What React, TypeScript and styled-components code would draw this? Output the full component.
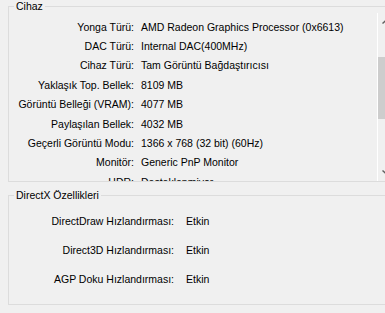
import React from "react";
import styled, { createGlobalStyle } from "styled-components";

const Global = createGlobalStyle`
  html, body {
    margin: 0;
    padding: 0;
    background: #f0f0f0;
    overflow: hidden;
  }
  body {
    font-family: "Liberation Sans", Arial, sans-serif;
    font-size: 10.5px;
    color: #000;
  }
`;

const Page = styled.div`
  width: 410px;
  height: 313px;
  padding-top: 6px;
  box-sizing: border-box;
  display: flex;
  flex-direction: column;
  gap: 13px;
`;

const GroupBox = styled.section<{ $padTop: number; $padBottom: number }>`
  position: relative;
  margin-left: 8px;
  border: 1px solid #dcdcdc;
  padding: ${(p) => p.$padTop}px 0 ${(p) => p.$padBottom}px 0;
`;

const Caption = styled.span`
  position: absolute;
  top: -8px;
  left: 5px;
  padding: 0 2px;
  line-height: 14px;
  background: #f0f0f0;
`;

const ScrollPane = styled.div`
  display: flex;
  height: 168px;
`;

const PaneContent = styled.div`
  flex: 0 0 368px;
  overflow: hidden;
  padding-top: 4px;
  box-sizing: border-box;
`;

const InfoGrid = styled.div<{ $labelWidth: number; $gap: number; $rowHeight: number }>`
  display: grid;
  grid-template-columns: ${(p) => p.$labelWidth}px 1fr;
  column-gap: ${(p) => p.$gap}px;
  grid-auto-rows: ${(p) => p.$rowHeight}px;
  align-items: center;
  white-space: nowrap;
`;

const Label = styled.span`
  text-align: right;
`;

const Value = styled.span``;

const Scrollbar = styled.div`
  flex: 0 0 17px;
  border-left: 1px solid #ffffff;
  display: flex;
  flex-direction: column;
  background: #f0f0f0;
`;

const ArrowButton = styled.div`
  height: 17px;
  display: flex;
  align-items: center;
  justify-content: center;
`;

const Track = styled.div`
  flex: 1;
  display: flex;
  flex-direction: column;
`;

const Thumb = styled.div<{ $offset: number; $size: number }>`
  margin-top: ${(p) => p.$offset}px;
  height: ${(p) => p.$size}px;
  background: #cdcdcd;
`;

const deviceRows: [string, string][] = [
  ["Yonga Türü:", "AMD Radeon Graphics Processor (0x6613)"],
  ["DAC Türü:", "Internal DAC(400MHz)"],
  ["Cihaz Türü:", "Tam Görüntü Bağdaştırıcısı"],
  ["Yaklaşık Top. Bellek:", "8109 MB"],
  ["Görüntü Belleği (VRAM):", "4077 MB"],
  ["Paylaşılan Bellek:", "4032 MB"],
  ["Geçerli Görüntü Modu:", "1366 x 768 (32 bit) (60Hz)"],
  ["Monitör:", "Generic PnP Monitor"],
  ["HDR:", "Desteklenmiyor"],
];

const dxRows: [string, string][] = [
  ["DirectDraw Hızlandırması:", "Etkin"],
  ["Direct3D Hızlandırması:", "Etkin"],
  ["AGP Doku Hızlandırması:", "Etkin"],
];

const Chevron = ({ up }: { up: boolean }) => (
  <svg width="9" height="5" viewBox="0 0 9 5">
    <path
      d={up ? "M0.5 4.5 L4.5 0.8 L8.5 4.5" : "M0.5 0.5 L4.5 4.2 L8.5 0.5"}
      fill="none"
      stroke="#606060"
      strokeWidth="1.4"
    />
  </svg>
);

export default function App() {
  return (
    <>
      <Global />
      <Page>
        <GroupBox $padTop={6} $padBottom={0}>
          <Caption>Cihaz</Caption>
          <ScrollPane>
            <PaneContent>
              <InfoGrid $labelWidth={125} $gap={7} $rowHeight={19.4}>
                {deviceRows.map(([l, v]) => (
                  <React.Fragment key={l}>
                    <Label>{l}</Label>
                    <Value>{v}</Value>
                  </React.Fragment>
                ))}
              </InfoGrid>
            </PaneContent>
            <Scrollbar>
              <ArrowButton>
                <Chevron up />
              </ArrowButton>
              <Track>
                <Thumb $offset={27} $size={62} />
              </Track>
              <ArrowButton>
                <Chevron up={false} />
              </ArrowButton>
            </Scrollbar>
          </ScrollPane>
        </GroupBox>
        <GroupBox $padTop={10} $padBottom={10}>
          <Caption>DirectX Özellikleri</Caption>
          <InfoGrid $labelWidth={165} $gap={12} $rowHeight={29.3}>
            {dxRows.map(([l, v]) => (
              <React.Fragment key={l}>
                <Label>{l}</Label>
                <Value>{v}</Value>
              </React.Fragment>
            ))}
          </InfoGrid>
        </GroupBox>
      </Page>
    </>
  );
}
